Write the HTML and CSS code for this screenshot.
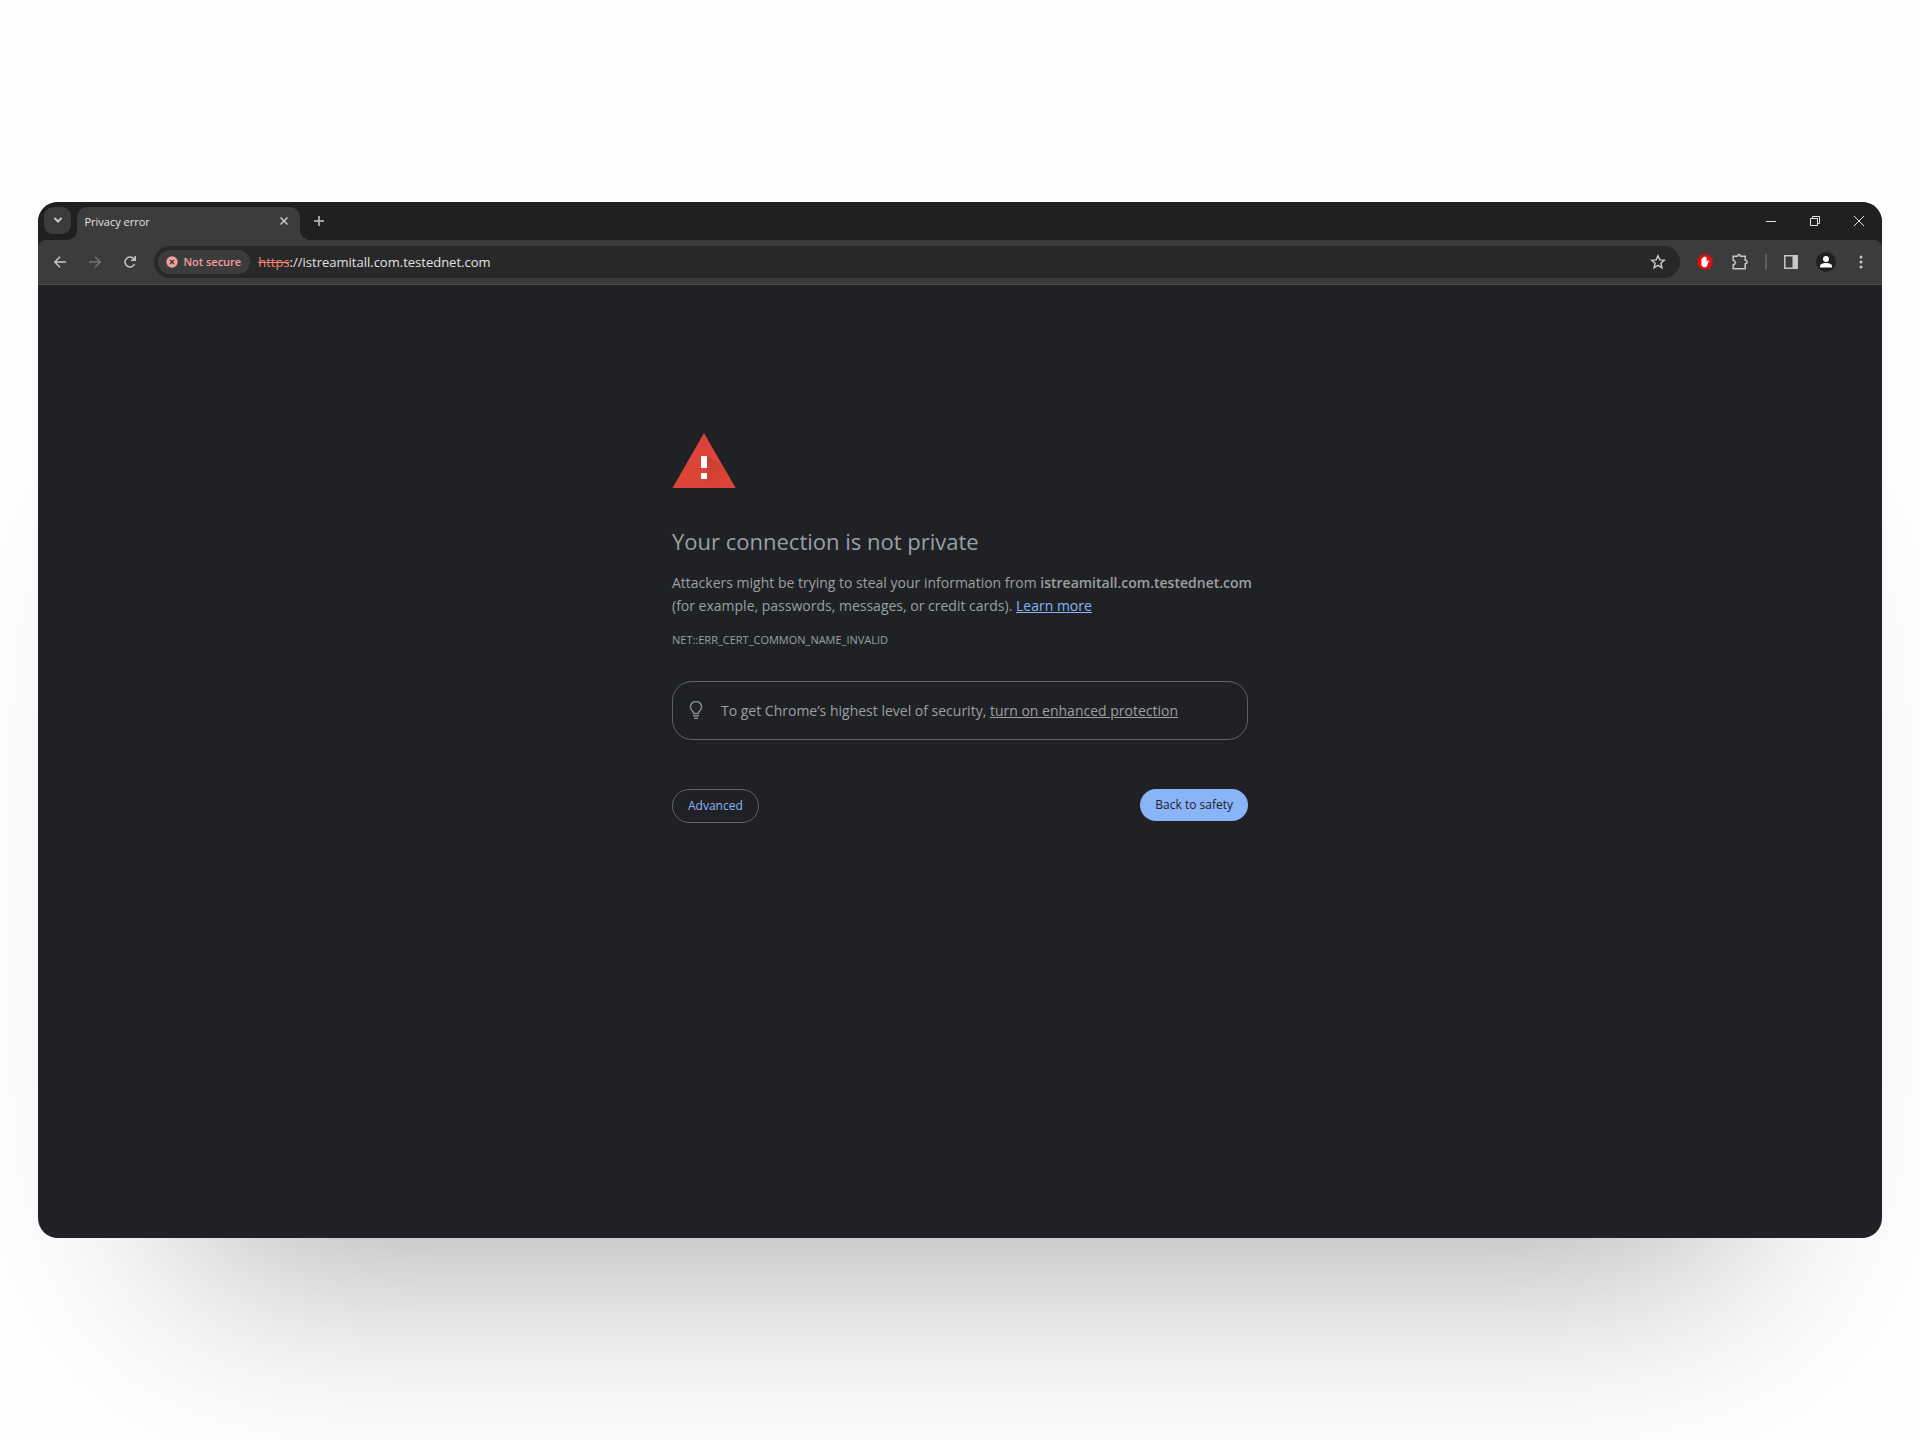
FILE: index.html
```html
<!DOCTYPE html>
<html lang="en">
<head>
    <meta charset="UTF-8">
    <meta name="viewport" content="width=device-width, initial-scale=1.0">
    <title>Privacy error</title>
    <link rel="stylesheet" href="styles.css">
</head>
<body>
    <div class="window">
        <!-- tab strip -->
        <header class="tabstrip">
            <button class="tab-search" aria-label="Search tabs">
                <svg width="10" height="6" viewBox="0 0 10 6"><path d="M1.500 1L5 4.500 8.500 1" stroke-width="2"/></svg>
            </button>
            <div class="tab">
                <span class="tab-title">Privacy error</span>
                <button class="tab-close" aria-label="Close tab">
                    <svg width="8" height="8" viewBox="0 0 8 8"><path d="M0.5 0.5l7 7M7.5 0.5l-7 7"/></svg>
                </button>
            </div>
            <button class="new-tab" aria-label="New tab">
                <svg width="10" height="10" viewBox="0 0 10 10"><path d="M5 0v10M0 5h10"/></svg>
            </button>
            <div class="window-controls">
                <button aria-label="Minimize">
                    <svg width="10" height="10" viewBox="0 0 10 10"><path d="M0 5.5h10"/></svg>
                </button>
                <button aria-label="Restore">
                    <svg width="10" height="10" viewBox="0 0 10 10"><path d="M0.5 2.5h7v7h-7zM2.5 2.5v-2h7v7h-2"/></svg>
                </button>
                <button aria-label="Close">
                    <svg width="10" height="10" viewBox="0 0 10 10"><path d="M0 0l10 10M10 0L0 10"/></svg>
                </button>
            </div>
        </header>

        <!-- toolbar -->
        <nav class="toolbar">
            <div class="nav-buttons">
                <button aria-label="Back">
                    <svg width="12" height="12" viewBox="0 0 12 12"><path d="M12 6H1M6 0.7L0.8 6 6 11.3"/></svg>
                </button>
                <button class="dim" aria-label="Forward">
                    <svg width="12" height="12" viewBox="0 0 12 12"><path d="M0 6h11M6 0.7L11.2 6 6 11.3"/></svg>
                </button>
                <button aria-label="Reload">
                    <svg width="12" height="12" viewBox="0 0 12 12"><path d="M10.6 8A5 5 0 1 1 9.9 2.8L11 4M11.2 0v4.3H7"/></svg>
                </button>
            </div>
            <div class="omnibox">
                <button class="chip">
                    <svg width="12" height="12" viewBox="0 0 12 12"><circle cx="6" cy="6" r="5.7" fill="#f2a09a"/><path d="M4 4l4 4M8 4L4 8" stroke="#3c3c3c"/></svg>
                    Not secure
                </button>
                <label class="scheme" for="address">https</label>
                <input class="address" id="address" type="text" value="://istreamitall.com.testednet.com" spellcheck="false">
                <button class="star" aria-label="Bookmark this tab">
                    <svg width="16" height="16" viewBox="0 0 16 16"><path d="M8 1.8l1.8 4.1 4.5.4-3.4 3 1 4.4L8 11.4l-3.9 2.3 1-4.4-3.4-3 4.5-.4z"/></svg>
                </button>
            </div>
            <div class="actions">
                <button aria-label="Ad blocker">
                    <svg width="16" height="16" viewBox="0 0 16 16">
                        <path d="M4.900 0.400h6.200l4.500 4.500v6.200l-4.500 4.500H4.900L0.400 11.100V4.900z" fill="#e10d10" stroke="none"/>
                        <path d="M4.400 9V5.200c0-.8 1.200-.8 1.200 0V3.600c0-.8 1.300-.8 1.300 0V3c0-.8 1.400-.8 1.400 0v.6c0-.8 1.300-.8 1.300 0v4.500l1-1.400c.6-.8 1.600-.3 1.200.6l-1.400 3.600c-.6 1.500-1.400 2.300-2.900 2.300-2 0-3.100-1.400-3.100-3.400z" fill="#fff" stroke="none"/>
                    </svg>
                </button>
                <button aria-label="Extensions">
                    <svg width="18" height="18" viewBox="0 0 18 18"><path d="M2.200 3.300h4.300C6.500 1 9.500 1 9.500 3.300h4.700v4c2.500 0 2.500 3.500 0 3.500v4.900h-12v-4c2.700-.4 2.700-4 0-4.400z"/></svg>
                </button>
                <span class="divider"></span>
                <button aria-label="Side panel">
                    <svg width="14" height="14" viewBox="0 0 14 14"><path d="M0.8 0.8h12.4v12.4H0.8z"/><path d="M8.5 1H13v12H8.5z" fill="#c7c7c7" stroke="none"/></svg>
                </button>
                <button aria-label="Profile">
                    <svg width="20" height="20" viewBox="0 0 20 20"><circle cx="10" cy="10" r="10" fill="#1f2120" stroke="none"/><circle cx="10" cy="7" r="3" fill="#fff" stroke="none"/><path d="M4 15.5v-1.3C4 12 7 11 10 11s6 1 6 3.200v1.300z" fill="#fff" stroke="none"/></svg>
                </button>
                <button aria-label="Menu">
                    <svg width="4" height="14" viewBox="0 0 4 14"><g fill="#c7c7c7" stroke="none"><circle cx="2" cy="2" r="1.500"/><circle cx="2" cy="7" r="1.500"/><circle cx="2" cy="12" r="1.500"/></g></svg>
                </button>
            </div>
        </nav>

        <!-- error page -->
        <main class="page">
            <div class="interstitial">
                <svg class="warning" width="64" height="56" viewBox="0 0 64 56">
                    <defs>
                        <linearGradient id="shade" x1="0" y1="0" x2="1" y2="1">
                            <stop offset="0" stop-color="#b93a2f"/>
                            <stop offset="0.7" stop-color="#db4437"/>
                        </linearGradient>
                    </defs>
                    <path d="M32 0L63.500 55H0.500z" fill="#db4437"/>
                    <path d="M35 23l16 10 12.500 22H37l-8-9 6-6v-5z" fill="url(#shade)" opacity="0.700"/>
                    <path d="M29 23h6v12h-6zM29 40h6v6h-6z" fill="#fff"/>
                </svg>
                <h1>Your connection is not private</h1>
                <p class="message">Attackers might be trying to steal your information from <strong>istreamitall.com.testednet.com</strong><br>(for example, passwords, messages, or credit cards). <a href="#">Learn more</a></p>
                <p class="code">NET::ERR_CERT_COMMON_NAME_INVALID</p>
                <div class="promo">
                    <svg width="14" height="18" viewBox="0 0 14 18"><path d="M4.500 12.500v-1.700a5.500 5.500 0 1 1 5 0v1.700zM4 14.800h6M5 17.200h4"/></svg>
                    <p>To get Chrome’s highest level of security, <a href="#">turn on enhanced protection</a></p>
                </div>
                <div class="buttons">
                    <button class="advanced">Advanced</button>
                    <button class="safety">Back to safety</button>
                </div>
            </div>
        </main>
    </div>
</body>
</html>
```

FILE: styles.css
```css
* {
    box-sizing: border-box;
}

body {
    margin: 0;
    min-height: 100vh;
    display: flex;
    align-items: center;
    justify-content: center;
    background-color: #fefefe;
    font-family: "Open Sans", "Noto Sans", sans-serif;
    overflow: hidden;
}

button {
    display: flex;
    align-items: center;
    justify-content: center;
    padding: 0;
    border: none;
    background: none;
    color: inherit;
    font-family: inherit;
    cursor: pointer;
}

svg {
    display: block;
    flex: none;
    fill: none;
    stroke: #c7c7c7;
    stroke-width: 1.5;
}

.window {
    width: 96%;
    aspect-ratio: 16 / 9;
    display: flex;
    flex-direction: column;
    border-radius: 20px;
    overflow: hidden;
    background-color: #202124;
    box-shadow: 0 180px 200px -150px rgba(0, 0, 0, 0.32);
}

/* tab strip */
.tabstrip {
    display: flex;
    align-items: flex-start;
    height: 38px;
    padding: 5px 1px 0 6px;
    background-color: #1f2120;
    color: #e3e3e3;
}

.tab-search {
    width: 27px;
    height: 27px;
    border-radius: 9px;
    background-color: #3c3c3c;
}

.tab {
    position: relative;
    display: flex;
    align-items: center;
    justify-content: space-between;
    width: 223px;
    height: 33px;
    margin-left: 6px;
    padding: 0 10px 4px 7px;
    border-radius: 10px 10px 0 0;
    background-color: #3c3c3c;
    font-size: 11px;
}

/* flared bottom corners of the active tab */
.tab::before,
.tab::after {
    content: "";
    position: absolute;
    bottom: 0;
    width: 10px;
    height: 10px;
}

.tab::before {
    left: -10px;
    background: radial-gradient(circle at 0 0, transparent 10px, #3c3c3c 10px);
}

.tab::after {
    right: -10px;
    background: radial-gradient(circle at 100% 0, transparent 10px, #3c3c3c 10px);
}

.tab-close {
    width: 12px;
    height: 20px;
}

.new-tab {
    width: 28px;
    height: 28px;
    margin-left: 5px;
}

.window-controls {
    display: flex;
    margin-left: auto;
}

.window-controls button {
    width: 44px;
    height: 28px;
}

.window-controls svg {
    stroke-width: 1;
    stroke: #e3e3e3;
}

/* toolbar */
.toolbar {
    display: flex;
    align-items: center;
    height: 45px;
    padding-right: 3px;
    border-bottom: 1px solid #4a4a4a;
    border-radius: 8px 8px 0 0;
    background-color: #3c3c3c;
}

.nav-buttons {
    display: flex;
    padding: 0 7px 0 4px;
}

.nav-buttons button {
    width: 35px;
    height: 32px;
}

.nav-buttons .dim {
    opacity: 0.4;
}

.omnibox {
    flex: 1;
    display: flex;
    align-items: center;
    height: 32px;
    padding: 0 14px 0 4px;
    border-radius: 16px;
    background-color: #282828;
    font-size: 13px;
}

.chip {
    gap: 5px;
    height: 24px;
    margin-right: 8px;
    padding: 0 9px 0 8px;
    border-radius: 12px;
    background-color: #3c3c3c;
    color: #f2a09a;
    font-size: 11px;
    font-weight: 600;
}

.chip svg {
    stroke: none;
}

.scheme {
    color: #ee8277;
    text-decoration: line-through;
}

.address {
    flex: 1;
    padding: 0;
    border: none;
    outline: none;
    background: none;
    color: #e3e3e3;
    font: inherit;
}

.actions {
    display: flex;
    align-items: center;
    margin-left: 8px;
}

.actions button {
    width: 35px;
    height: 32px;
}

.divider {
    width: 2px;
    height: 16px;
    margin: 0 7px;
    background-color: #5c5c5c;
}

/* error page */
.page {
    flex: 1;
    padding: 148px 24px 0;
    color: #9aa0a6;
}

.interstitial {
    max-width: 576px;
    margin: 0 auto;
}

.warning {
    stroke: none;
}

h1 {
    margin: 34px 0 0;
    font-size: 22px;
    font-weight: 400;
    line-height: 36px;
}

.message {
    margin: 12px -16px 0 0;
    font-size: 14px;
    line-height: 23px;
}

.message strong {
    font-weight: 600;
}

.message a {
    color: #8ab4f8;
}

.code {
    margin: 14px 0 0;
    font-size: 11px;
    line-height: 18px;
}

.promo {
    display: flex;
    align-items: center;
    gap: 18px;
    height: 59px;
    margin-top: 32px;
    padding: 0 16px;
    border: 1px solid #5f6368;
    border-radius: 20px;
    font-size: 14px;
}

.promo svg {
    stroke: #80868b;
}

.promo p {
    margin: 0;
}

.promo a {
    color: inherit;
}

.buttons {
    display: flex;
    align-items: flex-start;
    justify-content: space-between;
    margin-top: 49px;
}

.buttons button {
    height: 32px;
    padding: 0 15px;
    border-radius: 17px;
    font-size: 12px;
}

.buttons .advanced {
    height: 34px;
    border: 1px solid #5f6368;
    color: #8ab4f8;
}

.buttons .safety {
    background-color: #8ab4f8;
    color: #202124;
}
```
